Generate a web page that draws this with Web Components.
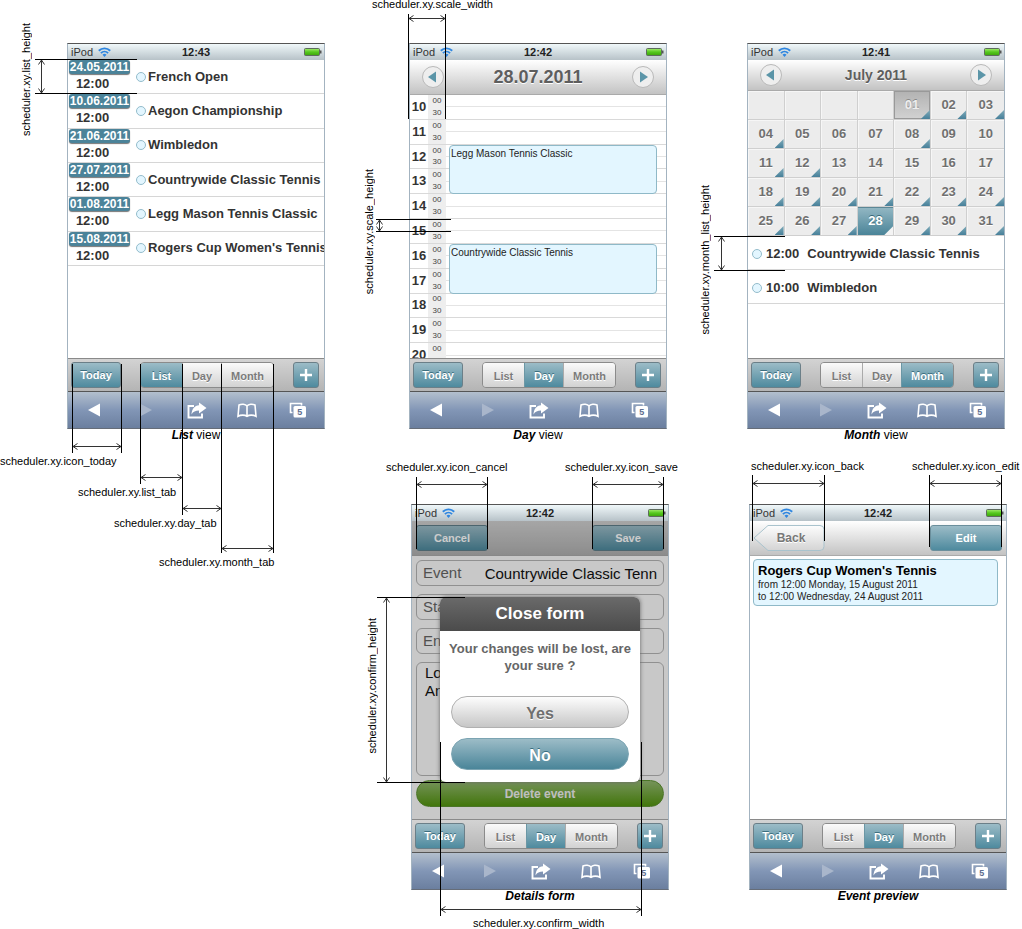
<!DOCTYPE html>
<html lang="en">
<head>
<meta charset="utf-8">
<title>Mobile scheduler sizes</title>
<style>
  body { margin: 0; background: #fff; color: #000; font-family: "Liberation Sans", Arial, sans-serif; }
</style>
</head>
<body>
<scheduler-sheet></scheduler-sheet>

<template id="sheet-template">
  <style>
    :host { display: block; box-sizing: border-box; min-height: 100vh; padding: 43px 0 22px; }
    .row { display: grid; grid-template-columns: 342fr 338fr 342fr; --inset: 67px; }
    .row + .row { margin-top: 58px; --inset: 69px; }
    .first { grid-column: 1; }
    .second { grid-column: 2; }
    .third { grid-column: 3; }
  </style>
  <section class="row">
    <view-figure class="first">
      <phone-frame time="12:43" active="List"><list-view></list-view></phone-frame>
      <span slot="caption"><b><i>List</i></b> view</span>
      <dim-mark vertical x="-32" y="16" w="102" h="35" arrow="6" lx="-14" ly="-37">scheduler.xy.list_height</dim-mark>
      <dim-mark x="5" y="321" w="50" h="89" arrow="82" lx="-72" ly="91">scheduler.xy.icon_today</dim-mark>
      <dim-mark x="73" y="321" w="43" h="120" arrow="113" lx="-62" ly="122">scheduler.xy.list_tab</dim-mark>
      <dim-mark x="115" y="321" w="40" h="151" arrow="144" lx="-68" ly="153">scheduler.xy.day_tab</dim-mark>
      <dim-mark x="154" y="321" w="53" h="189" arrow="184" lx="-62" ly="192">scheduler.xy.month_tab</dim-mark>
    </view-figure>
    <view-figure class="second">
      <phone-frame time="12:42" active="Day"><day-view></day-view></phone-frame>
      <span slot="caption"><b><i>Day</i></b> view</span>
      <dim-mark x="-1" y="-29" w="38" h="105" arrow="4" lx="-36" ly="-16">scheduler.xy.scale_width</dim-mark>
      <dim-mark vertical x="-33" y="176" w="75" h="13" arrow="3" lx="-12" ly="-51">scheduler.xy.scale_height</dim-mark>
    </view-figure>
    <view-figure class="third">
      <phone-frame time="12:41" active="Month"><month-view></month-view></phone-frame>
      <span slot="caption"><b><i>Month</i></b> view</span>
      <dim-mark vertical x="-33" y="193" w="71" h="35" arrow="7" lx="-14" ly="-52">scheduler.xy.month_list_height</dim-mark>
    </view-figure>
  </section>
  <section class="row">
    <view-figure class="second">
      <phone-frame time="12:42" active="Day"><details-form></details-form></phone-frame>
      <span slot="caption"><b><i>Details form</i></b></span>
      <dim-mark x="5" y="-27" w="72" h="72" arrow="7" lx="-30" ly="-16">scheduler.xy.icon_cancel</dim-mark>
      <dim-mark x="181" y="-27" w="72" h="72" arrow="7" lx="-27" ly="-16">scheduler.xy.icon_save</dim-mark>
      <dim-mark vertical x="-34" y="93" w="88" h="186" arrow="9" lx="-10" ly="20">scheduler.xy.confirm_height</dim-mark>
      <dim-mark x="29" y="238" w="202" h="174" arrow="167" lx="33" ly="175">scheduler.xy.confirm_width</dim-mark>
    </view-figure>
    <view-figure class="third">
      <phone-frame time="12:42" active="Day"><event-preview></event-preview></phone-frame>
      <span slot="caption"><b><i>Event preview</i></b></span>
      <dim-mark x="3" y="-29" w="73" h="66" arrow="8" lx="-1" ly="-15">scheduler.xy.icon_back</dim-mark>
      <dim-mark x="180" y="-29" w="73" h="72" arrow="8" lx="-17" ly="-15">scheduler.xy.icon_edit</dim-mark>
    </view-figure>
  </section>
</template>

<template id="figure-template">
  <style>
    :host { display: block; padding-left: var(--inset); }
    figure { margin: 0; position: relative; width: 258px; }
    figcaption { text-align: center; font-size: 12px; line-height: 13px; height: 17px; white-space: nowrap; }
    ::slotted([slot=caption]) { display: block; }
  </style>
  <figure>
    <slot></slot>
    <figcaption><slot name="caption"></slot></figcaption>
  </figure>
</template>

<template id="phone-template">
  <style>
    :host { display: flex; flex-direction: column; border: 1px solid; border-color: #555 #a3b3c0 #666d78 #a3b3c0; background: #fff; position: relative; }
    header { display: grid; grid-template-columns: 1fr auto 1fr; align-items: center; height: 16px; font-size: 11px; line-height: 14px; background: linear-gradient(#f0f8fa, #b7c2c8); color: #222; }
    header > span { display: flex; align-items: center; padding-left: 3px; gap: 5px; color: #333; }
    header svg.battery { justify-self: end; margin-right: 2px; }
    main { display: flex; flex-direction: column; min-height: 298px; }
    ::slotted(*) { flex: 1; }
    .tools { display: flex; justify-content: space-between; align-items: center; box-sizing: border-box; height: 34px; padding: 0 5px 0 3px; border: solid #8a8a8a; border-width: 1px 0; border-bottom-color: #555; background: linear-gradient(#d3d3d3, #b4b4b4); }
    button { font: bold 11px/14px "Liberation Sans", Arial, sans-serif; padding: 0; margin: 0; border: 0; background: none; }
    .teal { box-sizing: border-box; height: 26px; border: 1px solid #6b7f88; border-radius: 3px; color: #fff; background: linear-gradient(#9cbcc7, #4e8a9e); text-shadow: 0 -1px #3c6f80; }
    .today { width: 50px; }
    .add { width: 26px; display: grid; place-items: center; }
    .tabs { display: flex; box-sizing: border-box; width: 134px; height: 26px; border: 1px solid #8b8b8b; border-radius: 4px; overflow: hidden; }
    .tabs button { padding-top: 2px; color: #7b7b7b; background: linear-gradient(#fafafa, #d2d2d2); text-shadow: 0 1px #fff; border-left: 1px solid #aaa; }
    .tabs button:first-child { width: 41px; border-left: 0; }
    .tabs button:nth-child(2) { width: 39px; }
    .tabs button:last-child { flex: 1; }
    .tabs button.on { color: #fff; background: linear-gradient(#9cbcc7, #4e8a9e); text-shadow: 0 -1px #3c6f80; border-left-color: #6b97a5; }
    nav { display: grid; grid-template-columns: repeat(5, 1fr); height: 36px; background: linear-gradient(#b3bfcd, #8296b6 50%, #6b7f9f); }
    nav button { display: grid; place-items: center; }
    nav button svg { display: block; }
  </style>
  <header>
    <span>iPod
      <svg width="13" height="10" viewBox="0 0 13 10" fill="none" stroke="#2f86e0" stroke-width="1.9"><path d="M.8 3.700a8.200 8.200 0 0 1 11.400 0M2.900 6.100a5.200 5.200 0 0 1 7.200 0"/><path d="M4.500 7.700L6.500 9.900 8.500 7.700a2.900 2.900 0 0 0-4 0z" fill="#2f86e0" stroke="none"/></svg>
    </span>
    <b class="time"></b>
    <svg class="battery" width="18" height="9" viewBox="0 0 18 9"><defs><linearGradient id="charge" x2="0" y2="1"><stop stop-color="#a5ec70"/><stop offset=".5" stop-color="#55c81e"/><stop offset="1" stop-color="#3da30c"/></linearGradient></defs><rect x=".5" y=".5" width="15" height="7" rx="1" fill="url(#charge)" stroke="#5d6b5d"/><path d="M16 2.500h1.500v3H16z" fill="#555"/></svg>
  </header>
  <main><slot></slot></main>
  <div class="tools">
    <button class="teal today">Today</button>
    <div class="tabs"></div>
    <button class="teal add" aria-label="Add"><svg width="14" height="14" viewBox="0 0 14 14"><path d="M7 1v12M1 7h12" stroke="#fff" stroke-width="2.400"/></svg></button>
  </div>
  <nav>
    <button aria-label="Back"><svg width="14" height="14" viewBox="0 0 14 14"><path d="M1 7L13 .5v13z" fill="#fff"/></svg></button>
    <button aria-label="Forward"><svg width="14" height="14" viewBox="0 0 14 14"><path d="M14 7L2 .5v13z" fill="#a9b6cb"/></svg></button>
    <button aria-label="Share"><svg width="22" height="17" viewBox="0 0 22 17"><path d="M9 4H3.500v11.500h13.500V11.500" fill="none" stroke="#fff" stroke-width="1.900"/><path d="M14 .5L21.500 6 14 11.500V8.500C10.500 8.500 8 9.500 6.500 12.500c.3-5.500 3-8.800 7.500-9.200z" fill="#fff"/></svg></button>
    <button aria-label="Bookmarks"><svg width="20" height="15" viewBox="0 0 20 15" fill="none" stroke="#fff" stroke-width="1.600"><path d="M10 3C8.500 1 4.500.8 2 2L1 13.300c2.500-1.600 7-1.600 9 0 2-1.600 6.500-1.600 9 0L18 2C15.500.8 11.500 1 10 3zM10 3v10.300"/></svg></button>
    <button aria-label="Pages"><svg width="18" height="16" viewBox="0 0 18 16"><path d="M3.500 10.500h-2v-9h11v2" fill="none" stroke="#fff" stroke-width="1.600"/><rect x="4.500" y="4" width="12.500" height="11.500" rx="1.500" fill="#fff"/><text x="10.700" y="13.300" text-anchor="middle" font-size="9" font-weight="bold" fill="#5e6f90">5</text></svg></button>
  </nav>
</template>

<template id="list-template">
  <style>
    :host { display: block; }
    ul { display: grid; grid-auto-rows: 1fr; height: 206px; margin: 0; padding: 0; list-style: none; }
    li { display: grid; grid-template-columns: 61px 1fr; column-gap: 6px; align-items: center; padding-left: 1px; border-bottom: 1px solid #d6d6d6; font: bold 13px/16px "Liberation Sans", Arial, sans-serif; color: #333; overflow: hidden; }
    .when { text-align: center; align-self: start; }
    .date { display: block; height: 14px; border-radius: 3px; background: #4b8399; color: #fff; font-size: 12px; line-height: 14px; box-shadow: 0 1px 1px #777; }
    .hour { display: block; margin: 2px 14px 0 0; }
    .name { display: flex; align-items: center; gap: 2px; white-space: nowrap; overflow: hidden; }
    .name i { flex: none; width: 8px; height: 8px; border: 1px solid #93bccb; border-radius: 50%; background: #e3f6ff; }
  </style>
  <ul></ul>
</template>

<template id="day-template">
  <style>
    :host { display: flex; flex-direction: column; max-height: 298px; overflow: hidden; }
    .hours { display: grid; grid-template-columns: 18px 18px 1fr; grid-template-rows: repeat(11, 1fr); flex: none; height: 273px; color: #333; }
    .hour, .half, .slot { grid-row: var(--row); box-sizing: border-box; border-bottom: 1px solid #d9d9d9; }
    .hour { grid-column: 1; display: grid; place-items: center; font: bold 13px/16px "Liberation Sans", Arial, sans-serif; }
    .half { grid-column: 2; background: #eee; display: grid; grid-template-rows: 1fr 1fr; place-items: center; font: 8px/10px "Liberation Sans", Arial, sans-serif; color: #444; }
    .slot { grid-column: 3; background: linear-gradient(#e4e4e4, #e4e4e4) 0 50% / 100% 1px no-repeat; }
    .event { grid-column: 3; grid-row: var(--row) / span 2; z-index: 1; box-sizing: border-box; margin: 0 9px 0 3px; padding: 2px 1px; border: 1px solid #8fb9c8; border-radius: 4px; background: #e3f6ff; font: 10px/12px "Liberation Sans", Arial, sans-serif; color: #222; }
  </style>
  <calendar-header heading="28.07.2011" large></calendar-header>
  <div class="hours"></div>
</template>

<template id="header-template">
  <style>
    :host { display: grid; grid-template-columns: 24px 1fr 24px; align-items: center; flex: none; box-sizing: border-box; height: 31px; padding: 0 11px; background: linear-gradient(#fff, #c3c3c3); border-bottom: 1px solid #aaa; }
    :host([large]) { height: 35px; }
    h2 { margin: 0; text-align: center; font: bold 14px/18px "Liberation Sans", Arial, sans-serif; color: #5e5e5e; text-shadow: 0 1px #fff; }
    :host([large]) h2 { font-size: 18px; }
    button { padding: 0; border: 0; background: none; width: 24px; height: 24px; }
    svg { display: block; }
  </style>
  <button aria-label="Previous"><svg width="24" height="24" viewBox="0 0 24 24"><circle cx="12" cy="12" r="10.500" fill="#eee" stroke="#b9b9b9"/><path d="M7 12l8-5.500v11z" fill="#5b95a8"/></svg></button>
  <h2></h2>
  <button aria-label="Next"><svg width="24" height="24" viewBox="0 0 24 24"><circle cx="12" cy="12" r="10.500" fill="#eee" stroke="#b9b9b9"/><path d="M17 12L9 6.500v11z" fill="#5b95a8"/></svg></button>
</template>

<template id="month-template">
  <style>
    :host { display: block; }
    table { display: grid; height: 145px; background: #ececec; }
    tbody { display: grid; grid-template-rows: repeat(5, 1fr); }
    tr { display: grid; grid-template-columns: repeat(7, 1fr); }
    td { position: relative; display: grid; place-items: center; padding: 0; border: solid #cfcfcf; border-width: 0 1px 1px 0; box-shadow: inset 1px 1px #f6f6f6; font: bold 13px/16px "Liberation Sans", Arial, sans-serif; color: #707070; text-shadow: 0 1px #fff; }
    td:last-child { border-right: 0; }
    .busy::after, .today::after, .chosen::after { content: ""; position: absolute; right: 0; bottom: 0; width: 9px; height: 9px; background: linear-gradient(#7fabb9, #47809a); clip-path: polygon(100% 0, 100% 100%, 0 100%); }
    .today { background: linear-gradient(#b2b2b2, #d2d2d2); color: #eee; text-shadow: 0 -1px #888; box-shadow: inset 0 0 0 1px #999; }
    .chosen { background: linear-gradient(#94b8c4, #4a8498); color: #fff; text-shadow: 0 -1px #376877; box-shadow: inset 0 1px #5b8796; }
    .chosen::after { background: #f4f4f4; }
    ul { margin: 0; padding: 0; list-style: none; }
    li { display: flex; align-items: center; box-sizing: border-box; height: 34px; padding: 2px 0 0 4px; border-bottom: 1px solid #d6d6d6; font: bold 13px/16px "Liberation Sans", Arial, sans-serif; color: #333; white-space: nowrap; }
    li i { width: 8px; height: 8px; margin-right: 4px; border: 1px solid #93bccb; border-radius: 50%; background: #e3f6ff; }
    li time { margin-right: 8px; }
  </style>
  <calendar-header heading="July 2011"></calendar-header>
  <table><tbody></tbody></table>
  <ul>
    <li><i></i><time>12:00</time>Countrywide Classic Tennis</li>
    <li><i></i><time>10:00</time>Wimbledon</li>
  </ul>
</template>

<template id="form-template">
  <style>
    :host { display: flex; flex-direction: column; position: relative; background: #fafafa; }
    button, input, textarea { font-family: "Liberation Sans", Arial, sans-serif; box-sizing: border-box; margin: 0; }
    .bar { display: flex; justify-content: space-between; align-items: center; box-sizing: border-box; height: 35px; padding: 0 4px; background: linear-gradient(#d0d0d0, #b0b0b0); border-bottom: 1px solid #aaa; }
    .bar button { width: 72px; height: 26px; padding: 0; border: 1px solid #5f7f8a; border-radius: 3px; background: linear-gradient(#9cbcc7, #4e8a9e); color: #fff; font-size: 11px; font-weight: bold; }
    .fields { display: grid; grid-template-columns: minmax(0, 1fr); gap: 8px; padding: 4px 4px 0; }
    .field { display: flex; align-items: center; box-sizing: border-box; height: 26px; padding: 0 6px; border: 1px solid #b4b4b4; border-radius: 6px; font-size: 15px; line-height: 18px; color: #666; }
    .field input { flex: 1; min-width: 0; height: 22px; padding: 0; border: 0; background: none; text-align: right; font-size: 15px; color: #111; }
    textarea { display: block; width: 100%; height: 114px; padding: 1px 8px; border: 1px solid #b4b4b4; border-radius: 6px; background: none; resize: none; font-size: 15px; line-height: 18px; color: #111; }
    .delete { margin: 4px 4px 12px; height: 27px; padding: 0; border: 1px solid #5d9131; border-radius: 14px; background: linear-gradient(#93b870, #53940f); color: #eee; font-size: 12px; font-weight: bold; }
    .shade { position: absolute; inset: 0; background: rgba(0, 0, 0, .2); }
    .dialog { position: absolute; top: 76px; left: 28px; right: 28px; border-radius: 6px; overflow: hidden; background: #fff; box-shadow: 0 0 4px #666; text-align: center; }
    h2 { margin: 0; font: bold 17px/34px "Liberation Sans", Arial, sans-serif; color: #fff; background: linear-gradient(#6a6a6a, #4b4b4b); }
    p { margin: 9px 0 22px; padding: 0 8px; font: bold 13px/17px "Liberation Sans", Arial, sans-serif; color: #666; }
    .choices { display: grid; gap: 10px; padding: 0 11px 12px; }
    .choices button { height: 32px; padding: 3px 0 0; border-radius: 16px; font-size: 16px; font-weight: bold; }
    .yes { border: 1px solid #b0b0b0; background: linear-gradient(#fdfdfd, #c6c6c6); color: #6f6f6f; text-shadow: 0 1px #fff; }
    .no { border: 1px solid #7ba4b2; background: linear-gradient(#9cbcc7, #4a8599); color: #fff; text-shadow: 0 -1px #3c6f80; }
  </style>
  <div class="bar"><button>Cancel</button><button>Save</button></div>
  <div class="fields">
    <div class="field"><label for="event">Event</label><input id="event" value="Countrywide Classic Tenn"></div>
    <div class="field"><label for="start">Start</label><input id="start"></div>
    <div class="field"><label for="end">End</label><input id="end"></div>
    <textarea aria-label="Place">Lo
An</textarea>
  </div>
  <button class="delete">Delete event</button>
  <div class="shade"></div>
  <div class="dialog" role="dialog" aria-labelledby="question">
    <h2 id="question">Close form</h2>
    <p>Your changes will be lost, are your sure ?</p>
    <div class="choices"><button class="yes">Yes</button><button class="no">No</button></div>
  </div>
</template>

<template id="preview-template">
  <style>
    :host { display: block; }
    .bar { display: flex; justify-content: space-between; align-items: center; box-sizing: border-box; height: 35px; padding: 0 4px 0 3px; background: linear-gradient(#fff, #c3c3c3); border-bottom: 1px solid #aaa; }
    button { box-sizing: border-box; width: 72px; height: 26px; margin: 0; padding: 0; font: bold 12px/16px "Liberation Sans", Arial, sans-serif; }
    .back { display: grid; place-items: center; border: 0; background: none; color: #777; text-shadow: 0 1px #fff; }
    .back > * { grid-area: 1 / 1; }
    .back span { padding-left: 4px; z-index: 1; }
    .edit { border: 1px solid #6b8f9c; border-radius: 3px; background: linear-gradient(#9cbcc7, #4e8a9e); color: #fff; font-size: 11px; }
    article { margin: 3px 8px 0 3px; padding: 2px 4px; border: 1px solid #8fb9c8; border-radius: 4px; background: #e3f6ff; font-size: 10px; line-height: 12px; color: #222; }
    h2 { margin: 0; font: bold 13px/17px "Liberation Sans", Arial, sans-serif; color: #000; }
    p { margin: 0; }
  </style>
  <div class="bar">
    <button class="back"><svg width="72" height="26" viewBox="0 0 72 26"><defs><linearGradient id="pale" x2="0" y2="1"><stop stop-color="#fdfdfd"/><stop offset="1" stop-color="#d4d4d4"/></linearGradient></defs><path d="M15 .5H67a4 4 0 0 1 4 4V21.500a4 4 0 0 1-4 4H15L1 13z" fill="url(#pale)" stroke="#a9c3cd"/></svg><span>Back</span></button>
    <button class="edit">Edit</button>
  </div>
  <article>
    <h2>Rogers Cup Women's Tennis</h2>
    <p>from 12:00 Monday, 15 August 2011</p>
    <p>to 12:00 Wednesday, 24 August 2011</p>
  </article>
</template>

<template id="mark-template">
  <style>
    :host { display: block; position: absolute; left: var(--x); top: var(--y); width: var(--w); height: var(--h); box-sizing: border-box; border: solid #000; border-width: 0 1px; z-index: 2; }
    :host([vertical]) { border-width: 1px 0; }
    svg { position: absolute; left: -1px; top: calc(var(--arrow) - 3px); }
    :host([vertical]) svg { left: calc(var(--arrow) - 3px); top: -1px; }
    span { position: absolute; left: calc(var(--lx) - 1px); top: var(--ly); font: 11px/12px "Liberation Sans", Arial, sans-serif; color: #000; white-space: nowrap; }
    :host([vertical]) span { writing-mode: vertical-rl; transform: rotate(180deg); }
  </style>
  <svg fill="none" stroke="#333"><path/></svg>
  <span><slot></slot></span>
</template>

<script>
  const use = (host, id) => {
    const root = host.attachShadow({ mode: "open" });
    root.append(document.getElementById(id).content.cloneNode(true));
    return root;
  };

  class DimMark extends HTMLElement {
    connectedCallback() {
      if (this.shadowRoot) return;
      const root = use(this, "mark-template");
      for (const name of ["x", "y", "w", "h", "arrow", "lx", "ly"])
        this.style.setProperty("--" + name, this.getAttribute(name) + "px");
      const vertical = this.hasAttribute("vertical");
      const length = Number(this.getAttribute(vertical ? "h" : "w"));
      const svg = root.querySelector("svg");
      svg.setAttribute("width", vertical ? 7 : length);
      svg.setAttribute("height", vertical ? length : 7);
      const end = length - 1;
      svg.firstElementChild.setAttribute("d", vertical
        ? `M3.5 1V${end}M.5 5.500L3.500 1l3 4.500M.5 ${end - 4.5}l3 4.500 3-4.500`
        : `M1 3.5H${end}M5.500 .5L1 3.500l4.500 3M${end - 4.5} .5l4.500 3-4.500 3`);
    }
  }

  class ViewFigure extends HTMLElement {
    connectedCallback() { if (!this.shadowRoot) use(this, "figure-template"); }
  }

  class PhoneFrame extends HTMLElement {
    connectedCallback() {
      if (this.shadowRoot) return;
      const root = use(this, "phone-template");
      root.querySelector(".time").textContent = this.getAttribute("time");
      for (const name of ["List", "Day", "Month"]) {
        const tab = document.createElement("button");
        tab.textContent = name;
        tab.classList.toggle("on", name === this.getAttribute("active"));
        root.querySelector(".tabs").append(tab);
      }
    }
  }

  class CalendarHeader extends HTMLElement {
    connectedCallback() {
      if (this.shadowRoot) return;
      use(this, "header-template").querySelector("h2").textContent = this.getAttribute("heading");
    }
  }

  class ListView extends HTMLElement {
    connectedCallback() {
      if (this.shadowRoot) return;
      const events = [
        ["24.05.2011", "French Open"], ["10.06.2011", "Aegon Championship"],
        ["21.06.2011", "Wimbledon"], ["27.07.2011", "Countrywide Classic Tennis"],
        ["01.08.2011", "Legg Mason Tennis Classic"], ["15.08.2011", "Rogers Cup Women's Tennis"],
      ];
      use(this, "list-template").querySelector("ul").innerHTML = events.map(([date, name]) =>
        `<li><span class="when"><time class="date">${date}</time><time class="hour">12:00</time></span><span class="name"><i></i>${name}</span></li>`).join("");
    }
  }

  class DayView extends HTMLElement {
    connectedCallback() {
      if (this.shadowRoot) return;
      let html = "";
      for (let row = 1; row <= 11; row++)
        html += `<div class="hour" style="--row:${row}">${row + 9}</div><div class="half" style="--row:${row}"><span>00</span><span>30</span></div><div class="slot" style="--row:${row}"></div>`;
      html += `<div class="event" style="--row:3">Legg Mason Tennis Classic</div><div class="event" style="--row:7">Countrywide Classic Tennis</div>`;
      use(this, "day-template").querySelector(".hours").innerHTML = html;
    }
  }

  class MonthView extends HTMLElement {
    connectedCallback() {
      if (this.shadowRoot) return;
      const busy = [2, 3, 4, 8, 11, 12, 18, 19, 20, 21, 22, 23, 24, 25, 26, 27, 29, 30, 31];
      let html = "";
      for (let week = 0; week < 5; week++) {
        html += "<tr>";
        for (let i = 0; i < 7; i++) {
          const day = week * 7 + i - 3;
          const kind = day === 1 ? "today" : day === 28 ? "chosen" : busy.includes(day) ? "busy" : "";
          html += `<td class="${kind}">${day > 0 ? String(day).padStart(2, "0") : ""}</td>`;
        }
        html += "</tr>";
      }
      use(this, "month-template").querySelector("tbody").innerHTML = html;
    }
  }

  class DetailsForm extends HTMLElement {
    connectedCallback() { if (!this.shadowRoot) use(this, "form-template"); }
  }

  class EventPreview extends HTMLElement {
    connectedCallback() { if (!this.shadowRoot) use(this, "preview-template"); }
  }

  class SchedulerSheet extends HTMLElement {
    connectedCallback() { if (!this.shadowRoot) use(this, "sheet-template"); }
  }

  customElements.define("dim-mark", DimMark);
  customElements.define("calendar-header", CalendarHeader);
  customElements.define("list-view", ListView);
  customElements.define("day-view", DayView);
  customElements.define("month-view", MonthView);
  customElements.define("details-form", DetailsForm);
  customElements.define("event-preview", EventPreview);
  customElements.define("phone-frame", PhoneFrame);
  customElements.define("view-figure", ViewFigure);
  customElements.define("scheduler-sheet", SchedulerSheet);
</script>
</body>
</html>
